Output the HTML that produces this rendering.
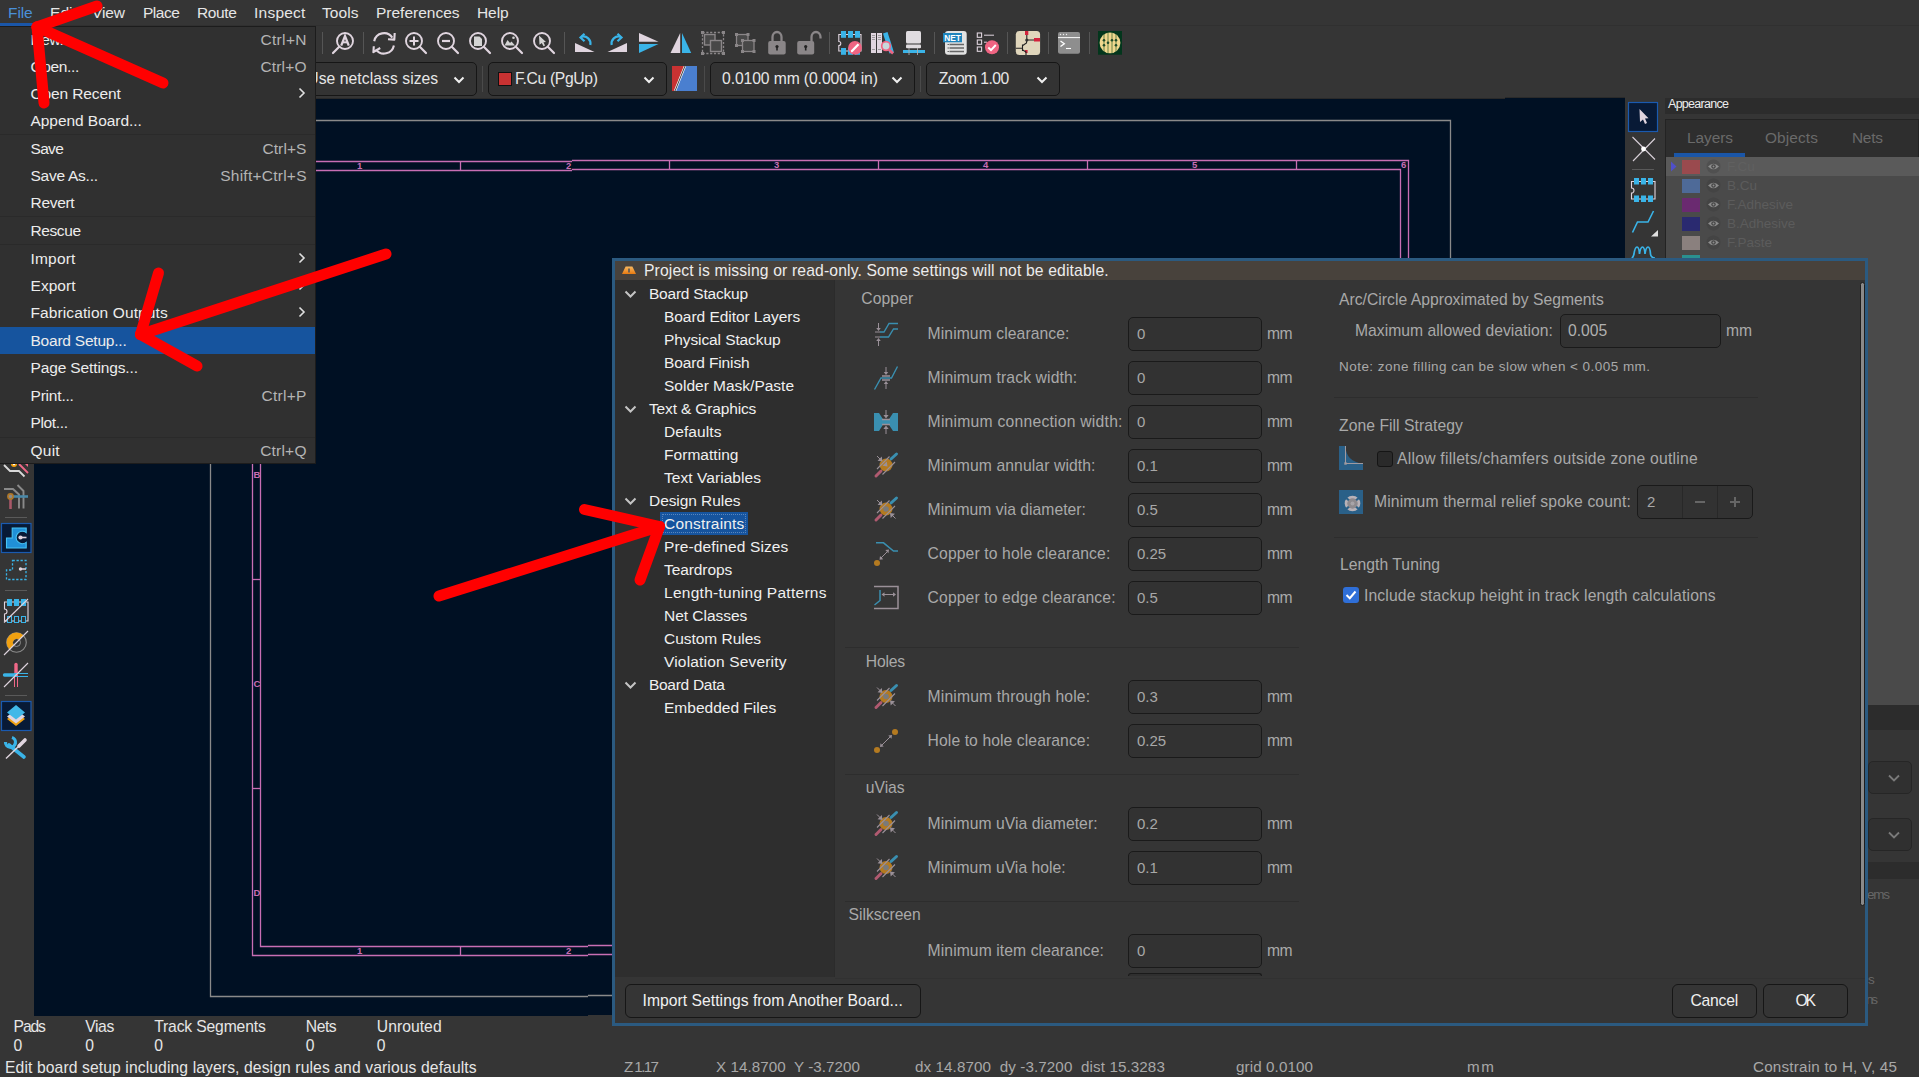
<!DOCTYPE html>
<html><head><meta charset="utf-8"><style>
html,body{margin:0;padding:0}
body{width:1919px;height:1077px;position:relative;overflow:hidden;background:#353535;font-family:"Liberation Sans",sans-serif}
.t{position:absolute;white-space:pre}
.r{position:absolute}
</style></head><body>
<div class="r" style="left:0px;top:25px;width:1919px;height:1px;background:#303030;"></div>
<div class="r" style="left:34px;top:99px;width:1591px;height:917px;background:#001023;"></div>
<div class="r" style="left:1505px;top:98px;width:120px;height:1px;background:#001023;"></div>
<div class="r" style="left:34px;top:98px;width:1471px;height:1px;background:#2a2a2a;"></div>
<div class="r" style="left:1505px;top:97px;width:120px;height:1px;background:#2a2a2a;"></div>
<div class="r" style="left:588px;top:1015px;width:24px;height:1px;background:#353535;"></div>
<svg class="r" style="left:0;top:0" width="34" height="770" viewBox="0 0 34 770"><path d="M4 465 L10 471 H19 L24.5 476.5" fill="none" stroke="#d8d8d8" stroke-width="1.8"/><circle cx="14" cy="464" r="3" fill="#f0a010"/><circle cx="14" cy="464" r="1.2" fill="#fff"/><path d="M19 464 L28 473" stroke="#f06888" stroke-width="1.8"/><path d="M25 464 H28 V467 Z" fill="#f06888"/><path d="M4 489 H13 L19 494.5 V508.5 M17.5 485 L23.5 491 V508.5" fill="none" stroke="#8a8a8a" stroke-width="1.9"/><path d="M10.5 499 V509" stroke="#a85868" stroke-width="2.6"/><path d="M13 496.5 H28" stroke="#4a88a8" stroke-width="2.6"/><circle cx="10.5" cy="496.5" r="2.6" fill="#8a8a8a" stroke="#b07828" stroke-width="1.6"/><path d="M5 517.5 H27" stroke="#5a5a5a" stroke-width="1"/><path d="M5 590.5 H27" stroke="#5a5a5a" stroke-width="1"/><path d="M5 695.5 H27" stroke="#5a5a5a" stroke-width="1"/><rect x="1.5" y="523.5" width="29.5" height="29" fill="#081a36" stroke="#1a5ab0" stroke-width="1.2"/><rect x="1.5" y="701.5" width="29.5" height="29" fill="#081a36" stroke="#1a5ab0" stroke-width="1.2"/><path d="M6.5 538 H12.2 V528 H26.2 V532.6 A 6.24 6.24 0 1 0 26.2 542.4 V548 H6.5 Z" fill="#2090d8" stroke="#48c4f4" stroke-width="1.1"/><circle cx="20.5" cy="537.5" r="2.1" fill="#e0d5df"/><path d="M20.5 537.5 H26.5" stroke="#e0d5df" stroke-width="1.6"/><path d="M12.5 560.5 H26 V579.5 H6.5 V570 H12.5 Z" fill="none" stroke="#3ab4e8" stroke-width="1.3" stroke-dasharray="2.3 1.7"/><circle cx="20.5" cy="569" r="1.7" fill="#e0d5df"/><path d="M20.5 569 H26" stroke="#e0d5df" stroke-width="1.5"/><path d="M4.5 602 H28 V621 H4.5 V614 A 2.5 2.5 0 0 0 4.5 609 Z" fill="none" stroke="#e0d5df" stroke-width="1.1"/><rect x="7" y="599" width="5" height="7" fill="#3ab4e8"/><rect x="7.5" y="616.5" width="4" height="6" fill="#333" stroke="#3ab4e8" stroke-width="1"/><rect x="14" y="599" width="5" height="7" fill="#3ab4e8"/><rect x="14.5" y="616.5" width="4" height="6" fill="#333" stroke="#3ab4e8" stroke-width="1"/><rect x="21" y="599" width="5" height="7" fill="#3ab4e8"/><rect x="21.5" y="616.5" width="4" height="6" fill="#333" stroke="#3ab4e8" stroke-width="1"/><path d="M4 622.5 L28 599" stroke="#e0d5df" stroke-width="1.1"/><circle cx="16.5" cy="642.5" r="9.8" fill="none" stroke="#8a8a8a" stroke-width="1.1"/><circle cx="16.5" cy="642.5" r="4" fill="none" stroke="#8a8a8a" stroke-width="1"/><path d="M9.5 649.5 A 9.8 9.8 0 0 1 23.5 635.5 L19.3 639.7 A 4 4 0 0 0 13.7 645.3 Z" fill="#f0a010"/><path d="M4 655 L28 631" stroke="#e0d5df" stroke-width="1.1"/><path d="M16 664.5 V675" stroke="#f06888" stroke-width="3.4" stroke-linecap="round"/><path d="M14.5 675 V687 M17.5 675 V687" stroke="#f06888" stroke-width="1"/><path d="M4.5 675 H14" stroke="#3ab4e8" stroke-width="3.4" stroke-linecap="round"/><path d="M14 673.5 H28 M14 676.5 H28" stroke="#3ab4e8" stroke-width="1"/><path d="M4 687 L28 663" stroke="#e0d5df" stroke-width="1.1"/><path d="M16 712 L25 719 L16 726 L7 719 Z" fill="#f0a010"/><path d="M16 709.5 L25 716.5 L16 723.5 L7 716.5 Z" fill="#e0d5df"/><path d="M16 705 L25 712.5 L16 719.5 L7 712.5 Z" fill="#40b8e8"/><path d="M9 745 L24 757" stroke="#3ab4e8" stroke-width="3.6" stroke-linecap="round"/><path d="M5.5 742 A 5 5 0 1 0 12 737.5" fill="none" stroke="#3ab4e8" stroke-width="3.2"/><path d="M6 758.5 L19 746" stroke="#e0d5df" stroke-width="1.4"/><path d="M19 746 L25 740" stroke="#e0d5df" stroke-width="3.6" stroke-linecap="round"/></svg>
<svg class="r" style="left:1625px;top:98px" width="40" height="162" viewBox="1625 98 40 162"><rect x="1628.5" y="102.5" width="29" height="29" fill="#081a36" stroke="#1a5ab0" stroke-width="1.2"/><path d="M1639.5 109 L1648.5 118.2 L1645 118.5 L1647 123 L1645 124 L1643 119.5 L1640 122 Z" fill="#e0d5df"/><path d="M1632.5 137 L1655 159.5 M1655 138.5 L1633 161" stroke="#d8d0d8" stroke-width="1.1"/><circle cx="1643.5" cy="149" r="2.4" fill="#fff"/><path d="M1632 169.5 H1654" stroke="#5a5a5a" stroke-width="1"/><path d="M1631.5 181.5 H1655 V199 H1631.5 V193 A 2.2 2.2 0 0 0 1631.5 188 Z" fill="none" stroke="#e0d5df" stroke-width="1.1"/><rect x="1634" y="178" width="5" height="6.5" fill="#3ab4e8"/><rect x="1634" y="195.5" width="5" height="6.5" fill="#3ab4e8"/><rect x="1641" y="178" width="5" height="6.5" fill="#3ab4e8"/><rect x="1641" y="195.5" width="5" height="6.5" fill="#3ab4e8"/><rect x="1648" y="178" width="5" height="6.5" fill="#3ab4e8"/><rect x="1648" y="195.5" width="5" height="6.5" fill="#3ab4e8"/><path d="M1632.5 232.5 L1637.5 222 H1648 L1653.5 211" fill="none" stroke="#3ab4e8" stroke-width="1.6"/><path d="M1651 236.5 L1658 230 V236.5 Z" fill="#e0e0e0"/><path d="M1631.5 258 Q1633 258 1634 254 Q1635 247 1637 247 Q1639 247 1639.5 254 Q1640.5 247 1642.5 247 Q1644.5 247 1645 254 Q1646 247 1648 247 Q1650 247 1650.5 254 Q1651 258 1655 258" fill="none" stroke="#3ab4e8" stroke-width="1.7"/></svg>
<svg class="r" style="left:0;top:0" width="1919" height="1077" viewBox="0 0 1919 1077">
<path d="M210.5 120.5 H1450.5 V995.5 H588 M588 996.5 H210.5 V120.5" fill="none" stroke="#8a8a8a" stroke-width="1.3"/>
<path d="M572 161.5 H252.5 V955.5 H588 M572 160.5 H1408.5 V954.5 H588" fill="none" stroke="#c86eb4" stroke-width="1.3"/>
<path d="M572 170.5 H260.5 V946.5 H588 M572 169.5 H1400.5 V945.5 H588" fill="none" stroke="#c86eb4" stroke-width="1.3"/>
<line x1="460.5" y1="161.5" x2="460.5" y2="170.5" stroke="#c86eb4" stroke-width="1.3"/>
<line x1="460.5" y1="946.5" x2="460.5" y2="955.5" stroke="#c86eb4" stroke-width="1.3"/>
<line x1="669.5" y1="160.5" x2="669.5" y2="169.5" stroke="#c86eb4" stroke-width="1.3"/>
<line x1="669.5" y1="945.5" x2="669.5" y2="954.5" stroke="#c86eb4" stroke-width="1.3"/>
<line x1="878.5" y1="160.5" x2="878.5" y2="169.5" stroke="#c86eb4" stroke-width="1.3"/>
<line x1="878.5" y1="945.5" x2="878.5" y2="954.5" stroke="#c86eb4" stroke-width="1.3"/>
<line x1="1087.5" y1="160.5" x2="1087.5" y2="169.5" stroke="#c86eb4" stroke-width="1.3"/>
<line x1="1087.5" y1="945.5" x2="1087.5" y2="954.5" stroke="#c86eb4" stroke-width="1.3"/>
<line x1="1296.5" y1="160.5" x2="1296.5" y2="169.5" stroke="#c86eb4" stroke-width="1.3"/>
<line x1="1296.5" y1="945.5" x2="1296.5" y2="954.5" stroke="#c86eb4" stroke-width="1.3"/>
<line x1="252.5" y1="370.5" x2="260.5" y2="370.5" stroke="#c86eb4" stroke-width="1.3"/>
<line x1="1400.5" y1="370.5" x2="1408.5" y2="370.5" stroke="#c86eb4" stroke-width="1.3"/>
<line x1="252.5" y1="579.5" x2="260.5" y2="579.5" stroke="#c86eb4" stroke-width="1.3"/>
<line x1="1400.5" y1="579.5" x2="1408.5" y2="579.5" stroke="#c86eb4" stroke-width="1.3"/>
<line x1="252.5" y1="788.5" x2="260.5" y2="788.5" stroke="#c86eb4" stroke-width="1.3"/>
<line x1="1400.5" y1="788.5" x2="1408.5" y2="788.5" stroke="#c86eb4" stroke-width="1.3"/>
</svg>
<div class="t" style="left:357.00px;top:161.46px;font-size:9.5px;line-height:9.5px;color:#c86eb4;font-weight:bold">1</div>
<div class="t" style="left:357.00px;top:946.46px;font-size:9.5px;line-height:9.5px;color:#c86eb4;font-weight:bold">1</div>
<div class="t" style="left:566.00px;top:161.46px;font-size:9.5px;line-height:9.5px;color:#c86eb4;font-weight:bold">2</div>
<div class="t" style="left:566.00px;top:946.46px;font-size:9.5px;line-height:9.5px;color:#c86eb4;font-weight:bold">2</div>
<div class="t" style="left:774.00px;top:160.46px;font-size:9.5px;line-height:9.5px;color:#c86eb4;font-weight:bold">3</div>
<div class="t" style="left:774.00px;top:946.46px;font-size:9.5px;line-height:9.5px;color:#c86eb4;font-weight:bold">3</div>
<div class="t" style="left:983.00px;top:160.46px;font-size:9.5px;line-height:9.5px;color:#c86eb4;font-weight:bold">4</div>
<div class="t" style="left:983.00px;top:946.46px;font-size:9.5px;line-height:9.5px;color:#c86eb4;font-weight:bold">4</div>
<div class="t" style="left:1192.00px;top:160.46px;font-size:9.5px;line-height:9.5px;color:#c86eb4;font-weight:bold">5</div>
<div class="t" style="left:1192.00px;top:946.46px;font-size:9.5px;line-height:9.5px;color:#c86eb4;font-weight:bold">5</div>
<div class="t" style="left:1401.00px;top:160.46px;font-size:9.5px;line-height:9.5px;color:#c86eb4;font-weight:bold">6</div>
<div class="t" style="left:1401.00px;top:946.46px;font-size:9.5px;line-height:9.5px;color:#c86eb4;font-weight:bold">6</div>
<div class="t" style="left:253.50px;top:261.46px;font-size:9.5px;line-height:9.5px;color:#c86eb4;font-weight:bold">A</div>
<div class="t" style="left:1401.50px;top:261.46px;font-size:9.5px;line-height:9.5px;color:#c86eb4;font-weight:bold">A</div>
<div class="t" style="left:253.50px;top:470.46px;font-size:9.5px;line-height:9.5px;color:#c86eb4;font-weight:bold">B</div>
<div class="t" style="left:1401.50px;top:470.46px;font-size:9.5px;line-height:9.5px;color:#c86eb4;font-weight:bold">B</div>
<div class="t" style="left:253.50px;top:679.46px;font-size:9.5px;line-height:9.5px;color:#c86eb4;font-weight:bold">C</div>
<div class="t" style="left:1401.50px;top:679.46px;font-size:9.5px;line-height:9.5px;color:#c86eb4;font-weight:bold">C</div>
<div class="t" style="left:253.50px;top:888.46px;font-size:9.5px;line-height:9.5px;color:#c86eb4;font-weight:bold">D</div>
<div class="t" style="left:1401.50px;top:888.46px;font-size:9.5px;line-height:9.5px;color:#c86eb4;font-weight:bold">D</div>
<div class="t" style="left:8.00px;top:5.28px;font-size:15.5px;line-height:15.5px;color:#4a90d9;letter-spacing:-0.085px;">File</div>
<div class="r" style="left:0px;top:23px;width:37px;height:3px;background:#1a56a8;"></div>
<div class="t" style="left:50.00px;top:5.28px;font-size:15.5px;line-height:15.5px;color:#e6e6e6;letter-spacing:0.062px;">Edit</div>
<div class="t" style="left:92.00px;top:5.28px;font-size:15.5px;line-height:15.5px;color:#e6e6e6;letter-spacing:-0.160px;">View</div>
<div class="t" style="left:143.00px;top:5.28px;font-size:15.5px;line-height:15.5px;color:#e6e6e6;letter-spacing:-0.488px;">Place</div>
<div class="t" style="left:197.00px;top:5.28px;font-size:15.5px;line-height:15.5px;color:#e6e6e6;letter-spacing:-0.396px;">Route</div>
<div class="t" style="left:254.00px;top:5.28px;font-size:15.5px;line-height:15.5px;color:#e6e6e6;letter-spacing:0.239px;">Inspect</div>
<div class="t" style="left:322.00px;top:5.28px;font-size:15.5px;line-height:15.5px;color:#e6e6e6;letter-spacing:0.096px;">Tools</div>
<div class="t" style="left:376.00px;top:5.28px;font-size:15.5px;line-height:15.5px;color:#e6e6e6;letter-spacing:-0.005px;">Preferences</div>
<div class="t" style="left:477.00px;top:5.28px;font-size:15.5px;line-height:15.5px;color:#e6e6e6;letter-spacing:-0.077px;">Help</div>
<svg class="r" style="left:0;top:0" width="1200" height="60" viewBox="0 0 1200 60"><line x1="322.5" y1="32" x2="322.5" y2="54" stroke="#555" stroke-width="1"/><line x1="363.5" y1="32" x2="363.5" y2="54" stroke="#555" stroke-width="1"/><line x1="564.5" y1="32" x2="564.5" y2="54" stroke="#555" stroke-width="1"/><line x1="829.5" y1="32" x2="829.5" y2="54" stroke="#555" stroke-width="1"/><line x1="934.5" y1="32" x2="934.5" y2="54" stroke="#555" stroke-width="1"/><line x1="1007.5" y1="32" x2="1007.5" y2="54" stroke="#555" stroke-width="1"/><line x1="1048.5" y1="32" x2="1048.5" y2="54" stroke="#555" stroke-width="1"/><line x1="1089.5" y1="32" x2="1089.5" y2="54" stroke="#555" stroke-width="1"/><circle cx="345" cy="41" r="8" fill="none" stroke="#e0d5df" stroke-width="1.9"/><line x1="339.2" y1="46.8" x2="333" y2="53" stroke="#e0d5df" stroke-width="2.2" stroke-linecap="round"/><path d="M341.2 45.6 L345 36 L348.8 45.6" fill="none" stroke="#e0d5df" stroke-width="2.3" stroke-linejoin="miter"/><path d="M342.6 42.3 H347.4" stroke="#e0d5df" stroke-width="2"/><path d="M374.2 41.2 A10 10 0 0 1 392.3 37.6" fill="none" stroke="#e0d5df" stroke-width="2.1"/><path d="M388 39.2 L394.3 39.6 L394.7 33" fill="none" stroke="#e0d5df" stroke-width="2.1" stroke-linejoin="round"/><path d="M393.9 45.5 A10 10 0 0 1 375.9 49.3" fill="none" stroke="#e0d5df" stroke-width="2.1"/><path d="M373.8 46.3 L373.4 52.2 L380.2 48" fill="none" stroke="#e0d5df" stroke-width="2.1" stroke-linejoin="round"/><circle cx="414" cy="41" r="8" fill="none" stroke="#e0d5df" stroke-width="1.9"/><line x1="419.8" y1="46.8" x2="426" y2="53" stroke="#e0d5df" stroke-width="2.2" stroke-linecap="round"/><path d="M409.5 41 H418.5 M414 36.5 V45.5" stroke="#e0d5df" stroke-width="2"/><circle cx="446" cy="41" r="8" fill="none" stroke="#e0d5df" stroke-width="1.9"/><line x1="451.8" y1="46.8" x2="458" y2="53" stroke="#e0d5df" stroke-width="2.2" stroke-linecap="round"/><path d="M442 41 H450" stroke="#e0d5df" stroke-width="2.2"/><circle cx="478" cy="41" r="8" fill="none" stroke="#e0d5df" stroke-width="1.9"/><line x1="483.8" y1="46.8" x2="490" y2="53" stroke="#e0d5df" stroke-width="2.2" stroke-linecap="round"/><path d="M474 36.5 H479.5 L482 39 V46 H474 Z" fill="#d4d4d4"/><circle cx="510" cy="41" r="8" fill="none" stroke="#e0d5df" stroke-width="1.9"/><line x1="515.8" y1="46.8" x2="522" y2="53" stroke="#e0d5df" stroke-width="2.2" stroke-linecap="round"/><path d="M504.5 45.5 L507.5 40 L510 43 L511.5 41.5 L515 45.5 Z" fill="#d4d4d4"/><circle cx="513.5" cy="37.7" r="1.3" fill="#d4d4d4"/><circle cx="542" cy="41" r="8" fill="none" stroke="#e0d5df" stroke-width="1.9"/><line x1="547.8" y1="46.8" x2="554" y2="53" stroke="#e0d5df" stroke-width="2.2" stroke-linecap="round"/><path d="M539 35.5 L546 42 L543.5 42.3 L545 45.5 L543.5 46.2 L541.8 43 L539.5 44.8 Z" fill="#d4d4d4"/><path d="M575 43 L594.5 52 H575 Z" fill="#e0d5df"/><path d="M590.3 45 A 7 7 0 0 0 581.5 36.8" fill="none" stroke="#3ab4e8" stroke-width="2.2"/><path d="M584.5 33.8 L580.5 37.5 L584.5 41.3" fill="none" stroke="#3ab4e8" stroke-width="2.2"/><path d="M607.5 52 L627 43 V52 Z" fill="#e0d5df"/><path d="M611.7 45 A 7 7 0 0 1 620.5 36.8" fill="none" stroke="#3ab4e8" stroke-width="2.2"/><path d="M617.5 33.8 L621.5 37.5 L617.5 41.3" fill="none" stroke="#3ab4e8" stroke-width="2.2"/><path d="M639 33 L658.5 41.8 H639 Z" fill="#e0d5df"/><path d="M639 44 H658.5 L639 53 Z" fill="#3ab4e8"/><path d="M680.2 33 V53 H670.5 Z" fill="#e0d5df"/><path d="M682 33 L691.2 53 H682 Z" fill="#3ab4e8"/><rect x="702.5" y="32.5" width="21" height="21" fill="none" stroke="#8a8688" stroke-width="1.3" stroke-dasharray="2.2 1.6"/><rect x="704.5" y="34.5" width="10.5" height="10.5" fill="#484848" stroke="#8a8688" stroke-width="1.4"/><rect x="710.5" y="40.5" width="11" height="11" fill="#484848" stroke="#8a8688" stroke-width="1.4"/><rect x="701.0" y="31.0" width="3" height="3" fill="#8a8688"/><rect x="722.0" y="31.0" width="3" height="3" fill="#8a8688"/><rect x="701.0" y="52.0" width="3" height="3" fill="#8a8688"/><rect x="722.0" y="52.0" width="3" height="3" fill="#8a8688"/><rect x="736.5" y="34.5" width="11.5" height="11" fill="#484848" stroke="#8a8688" stroke-width="1.3"/><rect x="742.5" y="40.5" width="11.5" height="11" fill="#484848" stroke="#8a8688" stroke-width="1.3"/><rect x="735.0" y="33.0" width="3" height="3" fill="#8a8688"/><rect x="746.5" y="33.0" width="3" height="3" fill="#8a8688"/><rect x="735.0" y="44.0" width="3" height="3" fill="#8a8688"/><rect x="741.0" y="39.0" width="3" height="3" fill="#8a8688"/><rect x="752.5" y="39.0" width="3" height="3" fill="#8a8688"/><rect x="741.0" y="50.0" width="3" height="3" fill="#8a8688"/><rect x="752.5" y="50.0" width="3" height="3" fill="#8a8688"/><path d="M772.5 41.5 V37 A 4.5 5 0 0 1 781.5 37 V41.5" fill="none" stroke="#8a8688" stroke-width="2.3"/><rect x="768.2" y="41" width="17.5" height="13.5" rx="2" fill="#8a8688"/><circle cx="777" cy="46.5" r="1.6" fill="#222"/><rect x="776.2" y="46.5" width="1.6" height="4" fill="#222"/><path d="M811.5 41.5 V37 A 4.5 5 0 0 1 820.5 37 V38.5" fill="none" stroke="#8a8688" stroke-width="2.3"/><rect x="797.2" y="41" width="17" height="13.5" rx="2" fill="#8a8688"/><circle cx="805.7" cy="46.5" r="1.6" fill="#222"/><rect x="804.9" y="46.5" width="1.6" height="4" fill="#222"/><path d="M838.8 34.5 H861 V51 H838.8 V45.5 A 2 2 0 0 0 838.8 41.5 Z" fill="none" stroke="#e0d5df" stroke-width="1.1"/><rect x="841" y="31" width="5" height="6.8" fill="#3ab4e8"/><rect x="841" y="48" width="5" height="6.8" fill="#3ab4e8"/><rect x="848" y="31" width="5" height="6.8" fill="#3ab4e8"/><rect x="848" y="48" width="5" height="6.8" fill="#3ab4e8"/><rect x="855" y="31" width="5" height="6.8" fill="#3ab4e8"/><rect x="855" y="48" width="5" height="6.8" fill="#3ab4e8"/><circle cx="855" cy="47.8" r="6.9" fill="#f06482"/><path d="M851.5 51.5 L858.5 44.2" stroke="#fff" stroke-width="2.3"/><path d="M851 52.3 L851.2 50.5 L852.6 51.9 Z" fill="#fff"/><rect x="871" y="33" width="5" height="20" fill="#e0d5df"/><rect x="877" y="33" width="5" height="20" fill="#e0d5df"/><path d="M883 33.5 L887.5 32 L894 52.5 L889.5 53.5 Z" fill="#3ab4e8"/><circle cx="886" cy="46" r="4.3" fill="#c8d8dc" stroke="#f06482" stroke-width="1.7"/><path d="M889 49.5 L893 53.5" stroke="#f06482" stroke-width="2.5"/><path d="M872 35.5 H875 M872 37.5 H875 M872 39.5 H875 M878 35.5 H881 M878 37.5 H881 M878 39.5 H881 M872 49.5 H875 M878 49.5 H881" stroke="#8a8a8a" stroke-width="0.8"/><rect x="906" y="31" width="15" height="12.5" rx="1.5" fill="#e0dce0"/><rect x="906" y="44.5" width="15" height="3.8" rx="1" fill="#e0dce0"/><rect x="903" y="50" width="22" height="3" fill="#3ab4e8"/><path d="M909 48 V55 M917.5 48 V55" stroke="#aaa" stroke-width="0.9"/><rect x="945" y="31" width="21.7" height="23.8" rx="3" fill="#e2e2e2"/><rect x="943" y="33" width="19" height="9.3" fill="#1e84bc"/><text x="944.2" y="41.3" font-family="Liberation Sans" font-weight="bold" font-size="9.3" fill="#fff" textLength="16.8" lengthAdjust="spacingAndGlyphs">NET</text><path d="M949.5 44.5 H964 M949.5 48 H964 M949.5 51.5 H964" stroke="#666" stroke-width="1.6"/><path d="M947.5 44.5 H949 M947.5 48 H949 M947.5 51.5 H949" stroke="#666" stroke-width="1"/><g fill="none" stroke="#e0d5df" stroke-width="1.1"><rect x="977.3" y="33" width="4.3" height="4.3"/><rect x="977.3" y="40" width="4.3" height="4.3"/><rect x="977.3" y="47" width="4.3" height="4.3"/></g><path d="M984 35.2 H994 M984 42.2 H987" stroke="#e0d5df" stroke-width="1"/><circle cx="992" cy="47.3" r="7" fill="#f06482"/><path d="M988.3 47.5 L991 50.2 L995.8 45" fill="none" stroke="#fff" stroke-width="1.9"/><rect x="1015.8" y="31" width="24.3" height="24" rx="3.5" fill="#e0d6bc"/><rect x="1025" y="31" width="3.3" height="4" fill="#d2223c"/><rect x="1034" y="38" width="6" height="3.5" fill="#d2223c"/><rect x="1025" y="50" width="2.6" height="3" fill="#d2223c"/><path d="M1026.8 35 V39.5 M1026.8 40 H1034 M1026.8 40 L1026.5 43 L1022.8 45.5 M1022.5 44.5 V51 M1015.8 48.2 H1022.5 M1022.8 50 L1026 52 V55" fill="none" stroke="#222" stroke-width="1.1"/><circle cx="1026.8" cy="40" r="1.6" fill="#333"/><rect x="1058" y="32" width="22" height="21.8" rx="2" fill="#8e8e8e"/><rect x="1058" y="37" width="22" height="1.1" fill="#f0f0f0"/><circle cx="1060.5" cy="34.5" r=".7" fill="#eee"/><circle cx="1063.5" cy="34.5" r=".7" fill="#eee"/><circle cx="1066.5" cy="34.5" r=".7" fill="#eee"/><path d="M1060.5 41 L1064.3 43.8 L1060.5 46.5" fill="none" stroke="#fff" stroke-width="1.3"/><path d="M1066 48.5 H1071" stroke="#fff" stroke-width="1.1"/><rect x="1098" y="31" width="24" height="23.7" fill="#03361c"/><circle cx="1110" cy="42.8" r="10.4" fill="#f0d88e"/><path d="M1104 34 V51.5 M1108 32.5 V53 M1112 32.5 V53 M1116 34 V51.5" stroke="#5a7a40" stroke-width="0.9"/><g fill="#1e4a28"><circle cx="1104" cy="40.3" r="1.3"/><circle cx="1104" cy="45.3" r="1.3"/><circle cx="1108" cy="42.8" r="1.3"/><circle cx="1112" cy="40.3" r="1.3"/><circle cx="1116" cy="40.3" r="1.3"/><circle cx="1116" cy="45.3" r="1.3"/></g></svg>
<div class="r" style="left:200px;top:62px;width:277px;height:34px;background:#333333;border:1px solid #161616;border-radius:5px;box-sizing:border-box;"></div>
<div class="t" style="left:307.30px;top:70.91px;font-size:15.7px;line-height:15.7px;color:#e6e6e6;letter-spacing:0.059px;">Use netclass sizes</div>
<svg class="r" style="left:453px;top:74.5px;" width="12" height="10" viewBox="0 0 12 10"><path d="M1.5 2.5 L6 7 L10.5 2.5" fill="none" stroke="#f0f0f0" stroke-width="2"/></svg>
<div class="r" style="left:488px;top:62px;width:179px;height:34px;background:#333333;border:1px solid #161616;border-radius:5px;box-sizing:border-box;"></div>
<div class="t" style="left:515.00px;top:70.91px;font-size:15.7px;line-height:15.7px;color:#e6e6e6;letter-spacing:-0.335px;">F.Cu (PgUp)</div>
<svg class="r" style="left:643px;top:74.5px;" width="12" height="10" viewBox="0 0 12 10"><path d="M1.5 2.5 L6 7 L10.5 2.5" fill="none" stroke="#f0f0f0" stroke-width="2"/></svg>
<div class="r" style="left:498px;top:72px;width:14px;height:14px;background:#c83232;border:1px solid #111;box-sizing:border-box;"></div>
<div class="r" style="left:710px;top:62px;width:205px;height:34px;background:#333333;border:1px solid #161616;border-radius:5px;box-sizing:border-box;"></div>
<div class="t" style="left:722.00px;top:70.91px;font-size:15.7px;line-height:15.7px;color:#e6e6e6;letter-spacing:-0.097px;">0.0100 mm (0.0004 in)</div>
<svg class="r" style="left:891px;top:74.5px;" width="12" height="10" viewBox="0 0 12 10"><path d="M1.5 2.5 L6 7 L10.5 2.5" fill="none" stroke="#f0f0f0" stroke-width="2"/></svg>
<div class="r" style="left:926px;top:62px;width:134px;height:34px;background:#333333;border:1px solid #161616;border-radius:5px;box-sizing:border-box;"></div>
<div class="t" style="left:938.70px;top:70.91px;font-size:15.7px;line-height:15.7px;color:#e6e6e6;letter-spacing:-0.556px;">Zoom 1.00</div>
<svg class="r" style="left:1036px;top:74.5px;" width="12" height="10" viewBox="0 0 12 10"><path d="M1.5 2.5 L6 7 L10.5 2.5" fill="none" stroke="#f0f0f0" stroke-width="2"/></svg>
<div class="r" style="left:482px;top:66px;width:1px;height:26px;background:#4a4a4a;"></div>
<div class="r" style="left:704px;top:66px;width:1px;height:26px;background:#4a4a4a;"></div>
<div class="r" style="left:920px;top:66px;width:1px;height:26px;background:#4a4a4a;"></div>
<svg class="r" style="left:672px;top:66px;" width="25" height="25" viewBox="0 0 25 25"><rect width="25" height="25" fill="#4a7fd0"/><path d="M0 0 H13 L3 25 H0 Z" fill="#c83232"/><path d="M13 0 L3 25" stroke="#fff" stroke-width="2.2"/><path d="M13 0 L3 25" stroke="#111" stroke-width="0.8"/></svg>
<div class="t" style="left:13.60px;top:1018.51px;font-size:15.7px;line-height:15.7px;color:#e6e6e6;letter-spacing:-1.165px;">Pads</div>
<div class="t" style="left:13.60px;top:1038.21px;font-size:15.7px;line-height:15.7px;color:#e6e6e6;">0</div>
<div class="t" style="left:85.20px;top:1018.51px;font-size:15.7px;line-height:15.7px;color:#e6e6e6;letter-spacing:-0.367px;">Vias</div>
<div class="t" style="left:85.20px;top:1038.21px;font-size:15.7px;line-height:15.7px;color:#e6e6e6;">0</div>
<div class="t" style="left:154.20px;top:1018.51px;font-size:15.7px;line-height:15.7px;color:#e6e6e6;letter-spacing:-0.159px;">Track Segments</div>
<div class="t" style="left:154.20px;top:1038.21px;font-size:15.7px;line-height:15.7px;color:#e6e6e6;">0</div>
<div class="t" style="left:305.80px;top:1018.51px;font-size:15.7px;line-height:15.7px;color:#e6e6e6;letter-spacing:-0.447px;">Nets</div>
<div class="t" style="left:305.80px;top:1038.21px;font-size:15.7px;line-height:15.7px;color:#e6e6e6;">0</div>
<div class="t" style="left:376.80px;top:1018.51px;font-size:15.7px;line-height:15.7px;color:#e6e6e6;letter-spacing:0.039px;">Unrouted</div>
<div class="t" style="left:376.80px;top:1038.21px;font-size:15.7px;line-height:15.7px;color:#e6e6e6;">0</div>
<div class="t" style="left:5.00px;top:1059.91px;font-size:15.7px;line-height:15.7px;color:#e6e6e6;letter-spacing:0.102px;">Edit board setup including layers, design rules and various defaults</div>
<div class="t" style="left:624.00px;top:1059.13px;font-size:15.2px;line-height:15.2px;color:#a8a8a8;letter-spacing:-1.603px;">Z 1.17</div>
<div class="t" style="left:716.00px;top:1059.13px;font-size:15.2px;line-height:15.2px;color:#a8a8a8;letter-spacing:0.051px;">X 14.8700  Y -3.7200</div>
<div class="t" style="left:915.00px;top:1059.13px;font-size:15.2px;line-height:15.2px;color:#a8a8a8;letter-spacing:0.094px;">dx 14.8700  dy -3.7200  dist 15.3283</div>
<div class="t" style="left:1236.00px;top:1059.13px;font-size:15.2px;line-height:15.2px;color:#a8a8a8;letter-spacing:0.100px;">grid 0.0100</div>
<div class="t" style="left:1467.00px;top:1059.13px;font-size:15.2px;line-height:15.2px;color:#a8a8a8;letter-spacing:1.616px;">mm</div>
<div class="t" style="left:1753.00px;top:1059.13px;font-size:15.2px;line-height:15.2px;color:#a8a8a8;letter-spacing:0.216px;">Constrain to H, V, 45</div>
<div class="r" style="left:1665px;top:98px;width:254px;height:16px;background:#2c2c2c;"></div>
<div class="t" style="left:1668.00px;top:97.62px;font-size:12.5px;line-height:12.5px;color:#ececec;letter-spacing:-0.708px;">Appearance</div>
<div class="r" style="left:1665px;top:119px;width:254px;height:586px;background:#2e2e2e;border:1px solid #232323;box-sizing:border-box;"></div>
<div class="t" style="left:1687.00px;top:129.86px;font-size:15.4px;line-height:15.4px;color:#6a6a6a;letter-spacing:-0.040px;">Layers</div>
<div class="t" style="left:1765.00px;top:129.86px;font-size:15.4px;line-height:15.4px;color:#6a6a6a;letter-spacing:0.132px;">Objects</div>
<div class="t" style="left:1852.00px;top:129.86px;font-size:15.4px;line-height:15.4px;color:#6a6a6a;letter-spacing:-0.241px;">Nets</div>
<div class="r" style="left:1674px;top:153px;width:71px;height:4px;background:#1a56a8;"></div>
<div class="r" style="left:1666px;top:157px;width:253px;height:548px;background:#4a4a4a;"></div>
<div class="r" style="left:1666px;top:157px;width:253px;height:19px;background:#5a5a5a;"></div>
<svg class="r" style="left:1670px;top:161px;" width="8" height="11" viewBox="0 0 8 11"><path d="M1 0.5 L6.5 5.5 L1 10.5 Z" fill="#5050c8"/></svg>
<div class="r" style="left:1682px;top:160px;width:18px;height:14px;background:#9a4a4e;"></div>
<div class="t" style="left:1727.00px;top:160.07px;font-size:13.5px;line-height:13.5px;color:#606060;">F.Cu</div>
<svg class="r" style="left:1706px;top:159px;" width="15" height="15" viewBox="0 0 15 15"><circle cx="7.5" cy="7.5" r="7" fill="#505050"/><path d="M2 7.5 Q7.5 2 13 7.5 Q7.5 13 2 7.5 Z" fill="#8c8c8c"/><circle cx="7.5" cy="7.5" r="2.2" fill="#454545"/><circle cx="7.5" cy="7.5" r="1" fill="#8c8c8c"/></svg>
<div class="r" style="left:1682px;top:179px;width:18px;height:14px;background:#4e6a98;"></div>
<div class="t" style="left:1727.00px;top:179.07px;font-size:13.5px;line-height:13.5px;color:#5c5c5c;">B.Cu</div>
<svg class="r" style="left:1706px;top:178px;" width="15" height="15" viewBox="0 0 15 15"><circle cx="7.5" cy="7.5" r="7" fill="#444444"/><path d="M2 7.5 Q7.5 2 13 7.5 Q7.5 13 2 7.5 Z" fill="#8c8c8c"/><circle cx="7.5" cy="7.5" r="2.2" fill="#454545"/><circle cx="7.5" cy="7.5" r="1" fill="#8c8c8c"/></svg>
<div class="r" style="left:1682px;top:198px;width:18px;height:14px;background:#6a2a70;"></div>
<div class="t" style="left:1727.00px;top:198.07px;font-size:13.5px;line-height:13.5px;color:#5c5c5c;">F.Adhesive</div>
<svg class="r" style="left:1706px;top:197px;" width="15" height="15" viewBox="0 0 15 15"><circle cx="7.5" cy="7.5" r="7" fill="#444444"/><path d="M2 7.5 Q7.5 2 13 7.5 Q7.5 13 2 7.5 Z" fill="#8c8c8c"/><circle cx="7.5" cy="7.5" r="2.2" fill="#454545"/><circle cx="7.5" cy="7.5" r="1" fill="#8c8c8c"/></svg>
<div class="r" style="left:1682px;top:217px;width:18px;height:14px;background:#2a2a70;"></div>
<div class="t" style="left:1727.00px;top:217.07px;font-size:13.5px;line-height:13.5px;color:#5c5c5c;">B.Adhesive</div>
<svg class="r" style="left:1706px;top:216px;" width="15" height="15" viewBox="0 0 15 15"><circle cx="7.5" cy="7.5" r="7" fill="#444444"/><path d="M2 7.5 Q7.5 2 13 7.5 Q7.5 13 2 7.5 Z" fill="#8c8c8c"/><circle cx="7.5" cy="7.5" r="2.2" fill="#454545"/><circle cx="7.5" cy="7.5" r="1" fill="#8c8c8c"/></svg>
<div class="r" style="left:1682px;top:236px;width:18px;height:14px;background:#8a807e;"></div>
<div class="t" style="left:1727.00px;top:236.07px;font-size:13.5px;line-height:13.5px;color:#5c5c5c;">F.Paste</div>
<svg class="r" style="left:1706px;top:235px;" width="15" height="15" viewBox="0 0 15 15"><circle cx="7.5" cy="7.5" r="7" fill="#444444"/><path d="M2 7.5 Q7.5 2 13 7.5 Q7.5 13 2 7.5 Z" fill="#8c8c8c"/><circle cx="7.5" cy="7.5" r="2.2" fill="#454545"/><circle cx="7.5" cy="7.5" r="1" fill="#8c8c8c"/></svg>
<div class="r" style="left:1682px;top:255px;width:18px;height:14px;background:#2a9090;"></div>
<div class="r" style="left:1868px;top:705px;width:51px;height:25px;background:#2c2c2c;"></div>
<div class="r" style="left:1868px;top:761px;width:44px;height:33px;background:#303030;border:1px solid #262626;border-radius:5px;box-sizing:border-box;"></div>
<div class="r" style="left:1868px;top:818px;width:44px;height:33px;background:#303030;border:1px solid #262626;border-radius:5px;box-sizing:border-box;"></div>
<svg class="r" style="left:1887px;top:774px;" width="14" height="9" viewBox="0 0 14 9"><path d="M2 1.5 L7 6.5 L12 1.5" fill="none" stroke="#7a7a7a" stroke-width="1.8"/></svg>
<svg class="r" style="left:1887px;top:831px;" width="14" height="9" viewBox="0 0 14 9"><path d="M2 1.5 L7 6.5 L12 1.5" fill="none" stroke="#7a7a7a" stroke-width="1.8"/></svg>
<div class="r" style="left:1868px;top:862px;width:51px;height:17px;background:#2c2c2c;"></div>
<div class="t" style="left:1867.00px;top:888.07px;font-size:13.5px;line-height:13.5px;color:#676767;letter-spacing:-1.258px;">ems</div>
<div class="t" style="left:1868.00px;top:972.57px;font-size:13.5px;line-height:13.5px;color:#676767;">s</div>
<div class="t" style="left:1866.00px;top:992.57px;font-size:13.5px;line-height:13.5px;color:#676767;letter-spacing:-2.310px;">ns</div>
<div class="r" style="left:0px;top:26px;width:316px;height:438px;background:#303030;border:1px solid #1c1c1c;border-left:none;box-sizing:border-box;"></div>
<div class="r" style="left:0px;top:134px;width:315px;height:1px;background:#2a2a2a;"></div>
<div class="r" style="left:0px;top:216px;width:315px;height:1px;background:#2a2a2a;"></div>
<div class="r" style="left:0px;top:244px;width:315px;height:1px;background:#2a2a2a;"></div>
<div class="r" style="left:0px;top:437px;width:315px;height:1px;background:#2a2a2a;"></div>
<div class="r" style="left:0px;top:327px;width:315px;height:27px;background:#16549e;"></div>
<div class="t" style="left:30.50px;top:31.88px;font-size:15.5px;line-height:15.5px;color:#ececec;letter-spacing:-0.418px;">New...</div>
<div class="t" style="left:260.40px;top:31.88px;font-size:15.5px;line-height:15.5px;color:#b4b4b4;letter-spacing:0.354px;">Ctrl+N</div>
<div class="t" style="left:30.50px;top:58.88px;font-size:15.5px;line-height:15.5px;color:#ececec;letter-spacing:-0.357px;">Open...</div>
<div class="t" style="left:260.40px;top:58.88px;font-size:15.5px;line-height:15.5px;color:#b4b4b4;letter-spacing:0.168px;">Ctrl+O</div>
<div class="t" style="left:30.50px;top:85.88px;font-size:15.5px;line-height:15.5px;color:#ececec;letter-spacing:-0.100px;">Open Recent</div>
<svg class="r" style="left:297px;top:86.5px;" width="10" height="12" viewBox="0 0 10 12"><path d="M2.5 1.5 L7 6 L2.5 10.5" fill="none" stroke="#e0e0e0" stroke-width="1.6"/></svg>
<div class="t" style="left:30.50px;top:112.88px;font-size:15.5px;line-height:15.5px;color:#ececec;letter-spacing:-0.055px;">Append Board...</div>
<div class="t" style="left:30.50px;top:140.88px;font-size:15.5px;line-height:15.5px;color:#ececec;letter-spacing:-0.680px;">Save</div>
<div class="t" style="left:262.40px;top:140.88px;font-size:15.5px;line-height:15.5px;color:#b4b4b4;letter-spacing:0.109px;">Ctrl+S</div>
<div class="t" style="left:30.50px;top:167.88px;font-size:15.5px;line-height:15.5px;color:#ececec;letter-spacing:-0.250px;">Save As...</div>
<div class="t" style="left:220.20px;top:167.88px;font-size:15.5px;line-height:15.5px;color:#b4b4b4;letter-spacing:0.250px;">Shift+Ctrl+S</div>
<div class="t" style="left:30.50px;top:194.88px;font-size:15.5px;line-height:15.5px;color:#ececec;letter-spacing:-0.305px;">Revert</div>
<div class="t" style="left:30.50px;top:222.88px;font-size:15.5px;line-height:15.5px;color:#ececec;letter-spacing:-0.409px;">Rescue</div>
<div class="t" style="left:30.50px;top:250.88px;font-size:15.5px;line-height:15.5px;color:#ececec;letter-spacing:0.196px;">Import</div>
<svg class="r" style="left:297px;top:251.5px;" width="10" height="12" viewBox="0 0 10 12"><path d="M2.5 1.5 L7 6 L2.5 10.5" fill="none" stroke="#e0e0e0" stroke-width="1.6"/></svg>
<div class="t" style="left:30.50px;top:277.88px;font-size:15.5px;line-height:15.5px;color:#ececec;letter-spacing:0.041px;">Export</div>
<svg class="r" style="left:297px;top:278.5px;" width="10" height="12" viewBox="0 0 10 12"><path d="M2.5 1.5 L7 6 L2.5 10.5" fill="none" stroke="#e0e0e0" stroke-width="1.6"/></svg>
<div class="t" style="left:30.50px;top:304.88px;font-size:15.5px;line-height:15.5px;color:#ececec;letter-spacing:0.105px;">Fabrication Outputs</div>
<svg class="r" style="left:297px;top:305.5px;" width="10" height="12" viewBox="0 0 10 12"><path d="M2.5 1.5 L7 6 L2.5 10.5" fill="none" stroke="#e0e0e0" stroke-width="1.6"/></svg>
<div class="t" style="left:30.50px;top:332.88px;font-size:15.5px;line-height:15.5px;color:#ececec;letter-spacing:-0.219px;">Board Setup...</div>
<div class="t" style="left:30.50px;top:359.88px;font-size:15.5px;line-height:15.5px;color:#ececec;letter-spacing:-0.129px;">Page Settings...</div>
<div class="t" style="left:30.50px;top:387.88px;font-size:15.5px;line-height:15.5px;color:#ececec;letter-spacing:-0.199px;">Print...</div>
<div class="t" style="left:261.50px;top:387.88px;font-size:15.5px;line-height:15.5px;color:#b4b4b4;letter-spacing:0.289px;">Ctrl+P</div>
<div class="t" style="left:30.50px;top:414.88px;font-size:15.5px;line-height:15.5px;color:#ececec;letter-spacing:-0.363px;">Plot...</div>
<div class="t" style="left:30.50px;top:442.88px;font-size:15.5px;line-height:15.5px;color:#ececec;letter-spacing:0.227px;">Quit</div>
<div class="t" style="left:260.20px;top:442.88px;font-size:15.5px;line-height:15.5px;color:#b4b4b4;letter-spacing:0.208px;">Ctrl+Q</div>
<div class="r" style="left:612px;top:258px;width:1256px;height:768px;background:#2b5a80;"></div>
<div class="r" style="left:615px;top:261px;width:1250px;height:762px;background:#353535;"></div>
<div class="r" style="left:615px;top:261px;width:1250px;height:19px;background:#48423c;"></div>
<div class="t" style="left:644.00px;top:262.71px;font-size:15.7px;line-height:15.7px;color:#ececec;letter-spacing:0.147px;">Project is missing or read-only. Some settings will not be editable.</div>
<svg class="r" style="left:621px;top:265px;" width="16" height="11" viewBox="0 0 16 11"><defs><linearGradient id="wg" x1="0" y1="0" x2="0" y2="1"><stop offset="0" stop-color="#f8b860"/><stop offset="1" stop-color="#e87a10"/></linearGradient></defs><path d="M4.6 1.6 H11.4 L15 9 H1 Z" fill="url(#wg)"/><rect x="7.2" y="3.5" width="1.6" height="4" fill="#555"/></svg>
<div class="r" style="left:615px;top:280px;width:219px;height:697px;background:#2e2e2e;"></div>
<div class="r" style="left:834px;top:280px;width:1px;height:697px;background:#2b2b2b;"></div>
<svg class="r" style="left:624px;top:290px;" width="13" height="9" viewBox="0 0 13 9"><path d="M1.5 1.5 L6.5 6.5 L11.5 1.5" fill="none" stroke="#c4c4c4" stroke-width="2"/></svg>
<div class="t" style="left:649.00px;top:285.88px;font-size:15.5px;line-height:15.5px;color:#f0f0f0;letter-spacing:-0.223px;">Board Stackup</div>
<div class="t" style="left:664.00px;top:308.88px;font-size:15.5px;line-height:15.5px;color:#f0f0f0;letter-spacing:-0.046px;">Board Editor Layers</div>
<div class="t" style="left:664.00px;top:331.88px;font-size:15.5px;line-height:15.5px;color:#f0f0f0;letter-spacing:-0.097px;">Physical Stackup</div>
<div class="t" style="left:664.00px;top:354.88px;font-size:15.5px;line-height:15.5px;color:#f0f0f0;letter-spacing:-0.123px;">Board Finish</div>
<div class="t" style="left:664.00px;top:377.88px;font-size:15.5px;line-height:15.5px;color:#f0f0f0;letter-spacing:-0.003px;">Solder Mask/Paste</div>
<svg class="r" style="left:624px;top:405px;" width="13" height="9" viewBox="0 0 13 9"><path d="M1.5 1.5 L6.5 6.5 L11.5 1.5" fill="none" stroke="#c4c4c4" stroke-width="2"/></svg>
<div class="t" style="left:649.00px;top:400.88px;font-size:15.5px;line-height:15.5px;color:#f0f0f0;letter-spacing:-0.145px;">Text &amp; Graphics</div>
<div class="t" style="left:664.00px;top:423.88px;font-size:15.5px;line-height:15.5px;color:#f0f0f0;letter-spacing:0.074px;">Defaults</div>
<div class="t" style="left:664.00px;top:446.88px;font-size:15.5px;line-height:15.5px;color:#f0f0f0;letter-spacing:0.046px;">Formatting</div>
<div class="t" style="left:664.00px;top:469.88px;font-size:15.5px;line-height:15.5px;color:#f0f0f0;letter-spacing:0.057px;">Text Variables</div>
<svg class="r" style="left:624px;top:497px;" width="13" height="9" viewBox="0 0 13 9"><path d="M1.5 1.5 L6.5 6.5 L11.5 1.5" fill="none" stroke="#c4c4c4" stroke-width="2"/></svg>
<div class="t" style="left:649.00px;top:492.88px;font-size:15.5px;line-height:15.5px;color:#f0f0f0;letter-spacing:-0.066px;">Design Rules</div>
<div class="r" style="left:660px;top:512px;width:88px;height:23px;background:#16549e;"></div>
<div class="r" style="left:662px;top:514px;width:84px;height:19px;border:1px dotted #8aa8d0;box-sizing:border-box;opacity:.6"></div>
<div class="t" style="left:664.00px;top:515.88px;font-size:15.5px;line-height:15.5px;color:#f0f0f0;letter-spacing:0.197px;">Constraints</div>
<div class="t" style="left:664.00px;top:538.88px;font-size:15.5px;line-height:15.5px;color:#f0f0f0;letter-spacing:0.125px;">Pre-defined Sizes</div>
<div class="t" style="left:664.00px;top:561.88px;font-size:15.5px;line-height:15.5px;color:#f0f0f0;letter-spacing:-0.084px;">Teardrops</div>
<div class="t" style="left:664.00px;top:584.88px;font-size:15.5px;line-height:15.5px;color:#f0f0f0;letter-spacing:0.269px;">Length-tuning Patterns</div>
<div class="t" style="left:664.00px;top:607.88px;font-size:15.5px;line-height:15.5px;color:#f0f0f0;letter-spacing:-0.025px;">Net Classes</div>
<div class="t" style="left:664.00px;top:630.88px;font-size:15.5px;line-height:15.5px;color:#f0f0f0;letter-spacing:-0.031px;">Custom Rules</div>
<div class="t" style="left:664.00px;top:653.88px;font-size:15.5px;line-height:15.5px;color:#f0f0f0;letter-spacing:0.176px;">Violation Severity</div>
<svg class="r" style="left:624px;top:681px;" width="13" height="9" viewBox="0 0 13 9"><path d="M1.5 1.5 L6.5 6.5 L11.5 1.5" fill="none" stroke="#c4c4c4" stroke-width="2"/></svg>
<div class="t" style="left:649.00px;top:676.88px;font-size:15.5px;line-height:15.5px;color:#f0f0f0;letter-spacing:-0.292px;">Board Data</div>
<div class="t" style="left:664.00px;top:699.88px;font-size:15.5px;line-height:15.5px;color:#f0f0f0;letter-spacing:0.010px;">Embedded Files</div>
<svg class="r" style="left:0;top:0" width="1919" height="1077"><path d="M880 332 H884 L889 323.5 H898 M880 337 H888.5 L893.5 329 H898" fill="none" stroke="#3a8fb0" stroke-width="1.4"/><path d="M875 332 H880 M875 337 H880 M878.5 323 V328 M878.5 341 V346" stroke="#9a9098" stroke-width="1"/><path d="M878.5 331 L876.25 328.00 L880.75 328.00 Z" fill="#9a9098"/><path d="M878.5 338 L880.75 341.00 L876.25 341.00 Z" fill="#9a9098"/><path d="M874.5 389.5 L881 378 H891.5 L897.5 366.5" fill="none" stroke="#3a8fb0" stroke-width="1.4"/><path d="M882 376 H890 M882 380 H890" stroke="#9a9098" stroke-width="1.4"/><path d="M886 367 V372 M886 384 V389" stroke="#9a9098" stroke-width="1"/><path d="M886 375 L883.75 372.00 L888.25 372.00 Z" fill="#9a9098"/><path d="M886 381 L888.25 384.00 L883.75 384.00 Z" fill="#9a9098"/><path d="M874 413 H879 L883.5 420 H888.5 L893 413 H898 V431 H893 L888.5 424 H883.5 L879 431 H874 Z" fill="#3a8fb0"/><path d="M882 419.5 H890 M882 424.5 H890" stroke="#9a9098" stroke-width="1.3"/><path d="M886 410 V415 M886 429 V434" stroke="#9a9098" stroke-width="1"/><path d="M886 418.5 L883.38 415.00 L888.62 415.00 Z" fill="#9a9098"/><path d="M886 425.5 L888.62 429.00 L883.38 429.00 Z" fill="#9a9098"/><path d="M876 476 L881 471" stroke="#b05a70" stroke-width="3" stroke-linecap="round"/><path d="M891 459 L896.5 454" stroke="#3a8fb0" stroke-width="3" stroke-linecap="round"/><circle cx="886" cy="465" r="6.5" fill="#b47a20"/><path d="M877 469 L889.5 456.5 M882.5 474.5 L895 462" stroke="#9a9098" stroke-width="1.1"/><path d="M877 456 L881 460" stroke="#9a9098" stroke-width="1"/><path d="M882.5 461.5 L877.55 460.79 L881.79 456.55 Z" fill="#9a9098"/><path d="M887.5 466.5 L882.55 465.79 L886.79 461.55 Z" fill="#9a9098"/><path d="M876 520 L881 515" stroke="#b05a70" stroke-width="3" stroke-linecap="round"/><path d="M891 503 L896.5 498" stroke="#3a8fb0" stroke-width="3" stroke-linecap="round"/><circle cx="886" cy="509" r="6.5" fill="#b47a20"/><circle cx="886" cy="509" r="2.8" fill="#7a7a7a"/><path d="M877 513 L889.5 500.5 M882.5 518.5 L895 506" stroke="#9a9098" stroke-width="1.1"/><path d="M877 500 L881 504" stroke="#9a9098" stroke-width="1"/><path d="M882.5 505.5 L877.55 504.79 L881.79 500.55 Z" fill="#9a9098"/><path d="M895.5 518.5 L891.5 514.5" stroke="#9a9098" stroke-width="1"/><path d="M890 513 L894.95 513.71 L890.71 517.95 Z" fill="#9a9098"/><path d="M876 542.8 H883.5 L893.5 551 H898" fill="none" stroke="#3a8fb0" stroke-width="1.5"/><circle cx="877" cy="563" r="3" fill="#b47a20"/><path d="M881 558 L887 552" stroke="#9a9098" stroke-width="1"/><path d="M889 549.5 L888.47 553.21 L885.29 550.03 Z" fill="#9a9098"/><path d="M879.5 559.8 L880.03 556.09 L883.21 559.27 Z" fill="#9a9098"/><path d="M874 586.5 H898 V608.5 H874" fill="none" stroke="#9a9098" stroke-width="1.5"/><path d="M874.5 605 L880 600.5 V590" fill="none" stroke="#3a8fb0" stroke-width="1.5"/><path d="M884 594.5 H893" stroke="#9a9098" stroke-width="1"/><path d="M881.5 594.5 L884.50 592.25 L884.50 596.75 Z" fill="#9a9098"/><path d="M896 594.5 L893.00 596.75 L893.00 592.25 Z" fill="#9a9098"/><path d="M876 707.5 L881 702.5" stroke="#b05a70" stroke-width="3" stroke-linecap="round"/><path d="M891 690.5 L896.5 685.5" stroke="#3a8fb0" stroke-width="3" stroke-linecap="round"/><circle cx="886" cy="696.5" r="6.5" fill="#b47a20"/><circle cx="886" cy="696.5" r="2.8" fill="#7a7a7a"/><path d="M877 700.5 L889.5 688.0 M882.5 706.0 L895 693.5" stroke="#9a9098" stroke-width="1.1"/><path d="M877 687.5 L881 691.5" stroke="#9a9098" stroke-width="1"/><path d="M882.5 693.0 L877.55 692.29 L881.79 688.05 Z" fill="#9a9098"/><path d="M895.5 706.0 L891.5 702.0" stroke="#9a9098" stroke-width="1"/><path d="M890 700.5 L894.95 701.21 L890.71 705.45 Z" fill="#9a9098"/><circle cx="877" cy="750" r="3" fill="#b47a20"/><circle cx="895" cy="732" r="3" fill="#b47a20"/><path d="M882 745 L890 737" stroke="#9a9098" stroke-width="1"/><path d="M892 735 L891.47 738.71 L888.29 735.53 Z" fill="#9a9098"/><path d="M880 747 L880.53 743.29 L883.71 746.47 Z" fill="#9a9098"/><path d="M876 834.5 L881 829.5" stroke="#b05a70" stroke-width="3" stroke-linecap="round"/><path d="M891 817.5 L896.5 812.5" stroke="#3a8fb0" stroke-width="3" stroke-linecap="round"/><circle cx="886" cy="823.5" r="6.5" fill="#b47a20"/><circle cx="886" cy="823.5" r="2.8" fill="#7a7a7a"/><path d="M877 827.5 L889.5 815.0 M882.5 833.0 L895 820.5" stroke="#9a9098" stroke-width="1.1"/><path d="M877 814.5 L881 818.5" stroke="#9a9098" stroke-width="1"/><path d="M882.5 820.0 L877.55 819.29 L881.79 815.05 Z" fill="#9a9098"/><path d="M895.5 833.0 L891.5 829.0" stroke="#9a9098" stroke-width="1"/><path d="M890 827.5 L894.95 828.21 L890.71 832.45 Z" fill="#9a9098"/><path d="M876 878.5 L881 873.5" stroke="#b05a70" stroke-width="3" stroke-linecap="round"/><path d="M891 861.5 L896.5 856.5" stroke="#3a8fb0" stroke-width="3" stroke-linecap="round"/><circle cx="886" cy="867.5" r="6.5" fill="#b47a20"/><circle cx="886" cy="867.5" r="2.8" fill="#7a7a7a"/><path d="M877 871.5 L889.5 859.0 M882.5 877.0 L895 864.5" stroke="#9a9098" stroke-width="1.1"/><path d="M877 858.5 L881 862.5" stroke="#9a9098" stroke-width="1"/><path d="M882.5 864.0 L877.55 863.29 L881.79 859.05 Z" fill="#9a9098"/><path d="M895.5 877.0 L891.5 873.0" stroke="#9a9098" stroke-width="1"/><path d="M890 871.5 L894.95 872.21 L890.71 876.45 Z" fill="#9a9098"/><path d="M1339 446 H1345.5 V463.5 H1363 V470 H1339 Z" fill="#2a6088"/><path d="M1345.5 446 Q1346 462 1363 463.5 H1345.5 Z" fill="#2a6088"/><path d="M1345.5 446 V463.5 H1363" fill="none" stroke="#a09aa0" stroke-width="1"/><rect x="1344.3" y="462.3" width="2.4" height="2.4" fill="#a09aa0"/><rect x="1339" y="490" width="24" height="24" fill="#2a6088"/><circle cx="1352.5" cy="503.5" r="7.8" fill="#b8b2b8"/><circle cx="1352.5" cy="503.5" r="5" fill="#8e8a8e"/><circle cx="1352.5" cy="503.5" r="2" fill="#a8a4a8"/><path d="M1344 496 L1361 511 M1361 496 L1344 511" stroke="#2a6088" stroke-width="2.2"/><circle cx="1352.5" cy="503.5" r="5" fill="#8e8a8e"/><circle cx="1352.5" cy="503.5" r="2" fill="#a8a4a8"/></svg>
<div class="t" style="left:861.20px;top:290.51px;font-size:15.7px;line-height:15.7px;color:#a9a9a9;letter-spacing:0.121px;">Copper</div>
<div class="t" style="left:927.60px;top:325.71px;font-size:15.7px;line-height:15.7px;color:#a9a9a9;letter-spacing:0.087px;">Minimum clearance:</div>
<div class="r" style="left:1128px;top:317px;width:134px;height:34px;background:#323232;border:1px solid #1a1a1a;border-radius:5px;box-sizing:border-box;"></div>
<div class="t" style="left:1137.00px;top:326.30px;font-size:15px;line-height:15px;color:#a8a8a8;">0</div>
<div class="t" style="left:1267.00px;top:325.71px;font-size:15.7px;line-height:15.7px;color:#a9a9a9;letter-spacing:-0.619px;">mm</div>
<div class="t" style="left:927.60px;top:369.71px;font-size:15.7px;line-height:15.7px;color:#a9a9a9;letter-spacing:0.120px;">Minimum track width:</div>
<div class="r" style="left:1128px;top:361px;width:134px;height:34px;background:#323232;border:1px solid #1a1a1a;border-radius:5px;box-sizing:border-box;"></div>
<div class="t" style="left:1137.00px;top:370.30px;font-size:15px;line-height:15px;color:#a8a8a8;">0</div>
<div class="t" style="left:1267.00px;top:369.71px;font-size:15.7px;line-height:15.7px;color:#a9a9a9;letter-spacing:-0.619px;">mm</div>
<div class="t" style="left:927.60px;top:413.71px;font-size:15.7px;line-height:15.7px;color:#a9a9a9;letter-spacing:0.236px;">Minimum connection width:</div>
<div class="r" style="left:1128px;top:405px;width:134px;height:34px;background:#323232;border:1px solid #1a1a1a;border-radius:5px;box-sizing:border-box;"></div>
<div class="t" style="left:1137.00px;top:414.30px;font-size:15px;line-height:15px;color:#a8a8a8;">0</div>
<div class="t" style="left:1267.00px;top:413.71px;font-size:15.7px;line-height:15.7px;color:#a9a9a9;letter-spacing:-0.619px;">mm</div>
<div class="t" style="left:927.60px;top:457.71px;font-size:15.7px;line-height:15.7px;color:#a9a9a9;letter-spacing:0.105px;">Minimum annular width:</div>
<div class="r" style="left:1128px;top:449px;width:134px;height:34px;background:#323232;border:1px solid #1a1a1a;border-radius:5px;box-sizing:border-box;"></div>
<div class="t" style="left:1137.00px;top:458.30px;font-size:15px;line-height:15px;color:#a8a8a8;">0.1</div>
<div class="t" style="left:1267.00px;top:457.71px;font-size:15.7px;line-height:15.7px;color:#a9a9a9;letter-spacing:-0.619px;">mm</div>
<div class="t" style="left:927.60px;top:501.71px;font-size:15.7px;line-height:15.7px;color:#a9a9a9;letter-spacing:0.028px;">Minimum via diameter:</div>
<div class="r" style="left:1128px;top:493px;width:134px;height:34px;background:#323232;border:1px solid #1a1a1a;border-radius:5px;box-sizing:border-box;"></div>
<div class="t" style="left:1137.00px;top:502.30px;font-size:15px;line-height:15px;color:#a8a8a8;">0.5</div>
<div class="t" style="left:1267.00px;top:501.71px;font-size:15.7px;line-height:15.7px;color:#a9a9a9;letter-spacing:-0.619px;">mm</div>
<div class="t" style="left:927.60px;top:545.71px;font-size:15.7px;line-height:15.7px;color:#a9a9a9;letter-spacing:0.126px;">Copper to hole clearance:</div>
<div class="r" style="left:1128px;top:537px;width:134px;height:34px;background:#323232;border:1px solid #1a1a1a;border-radius:5px;box-sizing:border-box;"></div>
<div class="t" style="left:1137.00px;top:546.30px;font-size:15px;line-height:15px;color:#a8a8a8;">0.25</div>
<div class="t" style="left:1267.00px;top:545.71px;font-size:15.7px;line-height:15.7px;color:#a9a9a9;letter-spacing:-0.619px;">mm</div>
<div class="t" style="left:927.60px;top:589.71px;font-size:15.7px;line-height:15.7px;color:#a9a9a9;letter-spacing:0.127px;">Copper to edge clearance:</div>
<div class="r" style="left:1128px;top:581px;width:134px;height:34px;background:#323232;border:1px solid #1a1a1a;border-radius:5px;box-sizing:border-box;"></div>
<div class="t" style="left:1137.00px;top:590.30px;font-size:15px;line-height:15px;color:#a8a8a8;">0.5</div>
<div class="t" style="left:1267.00px;top:589.71px;font-size:15.7px;line-height:15.7px;color:#a9a9a9;letter-spacing:-0.619px;">mm</div>
<div class="t" style="left:927.60px;top:688.71px;font-size:15.7px;line-height:15.7px;color:#a9a9a9;letter-spacing:0.147px;">Minimum through hole:</div>
<div class="r" style="left:1128px;top:680px;width:134px;height:34px;background:#323232;border:1px solid #1a1a1a;border-radius:5px;box-sizing:border-box;"></div>
<div class="t" style="left:1137.00px;top:689.30px;font-size:15px;line-height:15px;color:#a8a8a8;">0.3</div>
<div class="t" style="left:1267.00px;top:688.71px;font-size:15.7px;line-height:15.7px;color:#a9a9a9;letter-spacing:-0.619px;">mm</div>
<div class="t" style="left:927.60px;top:732.71px;font-size:15.7px;line-height:15.7px;color:#a9a9a9;letter-spacing:0.090px;">Hole to hole clearance:</div>
<div class="r" style="left:1128px;top:724px;width:134px;height:34px;background:#323232;border:1px solid #1a1a1a;border-radius:5px;box-sizing:border-box;"></div>
<div class="t" style="left:1137.00px;top:733.30px;font-size:15px;line-height:15px;color:#a8a8a8;">0.25</div>
<div class="t" style="left:1267.00px;top:732.71px;font-size:15.7px;line-height:15.7px;color:#a9a9a9;letter-spacing:-0.619px;">mm</div>
<div class="t" style="left:927.60px;top:815.71px;font-size:15.7px;line-height:15.7px;color:#a9a9a9;letter-spacing:0.051px;">Minimum uVia diameter:</div>
<div class="r" style="left:1128px;top:807px;width:134px;height:34px;background:#323232;border:1px solid #1a1a1a;border-radius:5px;box-sizing:border-box;"></div>
<div class="t" style="left:1137.00px;top:816.30px;font-size:15px;line-height:15px;color:#a8a8a8;">0.2</div>
<div class="t" style="left:1267.00px;top:815.71px;font-size:15.7px;line-height:15.7px;color:#a9a9a9;letter-spacing:-0.619px;">mm</div>
<div class="t" style="left:927.60px;top:859.71px;font-size:15.7px;line-height:15.7px;color:#a9a9a9;letter-spacing:0.039px;">Minimum uVia hole:</div>
<div class="r" style="left:1128px;top:851px;width:134px;height:34px;background:#323232;border:1px solid #1a1a1a;border-radius:5px;box-sizing:border-box;"></div>
<div class="t" style="left:1137.00px;top:860.30px;font-size:15px;line-height:15px;color:#a8a8a8;">0.1</div>
<div class="t" style="left:1267.00px;top:859.71px;font-size:15.7px;line-height:15.7px;color:#a9a9a9;letter-spacing:-0.619px;">mm</div>
<div class="t" style="left:927.60px;top:942.71px;font-size:15.7px;line-height:15.7px;color:#a9a9a9;letter-spacing:0.085px;">Minimum item clearance:</div>
<div class="r" style="left:1128px;top:934px;width:134px;height:34px;background:#323232;border:1px solid #1a1a1a;border-radius:5px;box-sizing:border-box;"></div>
<div class="t" style="left:1137.00px;top:943.30px;font-size:15px;line-height:15px;color:#a8a8a8;">0</div>
<div class="t" style="left:1267.00px;top:942.71px;font-size:15.7px;line-height:15.7px;color:#a9a9a9;letter-spacing:-0.619px;">mm</div>
<div class="r" style="left:1128px;top:973px;width:134px;height:3px;background:#2f2f2f;border:1px solid #1a1a1a;border-bottom:none;border-radius:4px 4px 0 0;box-sizing:border-box;"></div>
<div class="r" style="left:845px;top:647px;width:454px;height:1px;background:#2d2d2d;"></div>
<div class="r" style="left:845px;top:774px;width:454px;height:1px;background:#2d2d2d;"></div>
<div class="r" style="left:845px;top:901px;width:454px;height:1px;background:#2d2d2d;"></div>
<div class="t" style="left:865.80px;top:654.11px;font-size:15.7px;line-height:15.7px;color:#a9a9a9;letter-spacing:-0.173px;">Holes</div>
<div class="t" style="left:865.80px;top:780.21px;font-size:15.7px;line-height:15.7px;color:#a9a9a9;letter-spacing:-0.034px;">uVias</div>
<div class="t" style="left:848.60px;top:907.41px;font-size:15.7px;line-height:15.7px;color:#a9a9a9;letter-spacing:-0.020px;">Silkscreen</div>
<div class="t" style="left:1339.00px;top:291.71px;font-size:15.7px;line-height:15.7px;color:#a9a9a9;letter-spacing:0.018px;">Arc/Circle Approximated by Segments</div>
<div class="t" style="left:1355.00px;top:322.71px;font-size:15.7px;line-height:15.7px;color:#a9a9a9;letter-spacing:0.032px;">Maximum allowed deviation:</div>
<div class="r" style="left:1560px;top:314px;width:161px;height:34px;background:#323232;border:1px solid #1a1a1a;border-radius:5px;box-sizing:border-box;"></div>
<div class="t" style="left:1568.00px;top:322.71px;font-size:15.7px;line-height:15.7px;color:#b0b0b0;">0.005</div>
<div class="t" style="left:1726.00px;top:322.71px;font-size:15.7px;line-height:15.7px;color:#a9a9a9;">mm</div>
<div class="t" style="left:1339.00px;top:360.17px;font-size:13.5px;line-height:13.5px;color:#a9a9a9;letter-spacing:0.457px;">Note: zone filling can be slow when &lt; 0.005 mm.</div>
<div class="r" style="left:1334px;top:397px;width:424px;height:1px;background:#2d2d2d;"></div>
<div class="t" style="left:1339.00px;top:418.31px;font-size:15.7px;line-height:15.7px;color:#a9a9a9;letter-spacing:0.054px;">Zone Fill Strategy</div>
<div class="t" style="left:1397.00px;top:450.71px;font-size:15.7px;line-height:15.7px;color:#a9a9a9;letter-spacing:0.247px;">Allow fillets/chamfers outside zone outline</div>
<div class="r" style="left:1377px;top:451px;width:16px;height:16px;background:#2a2a2a;border:1px solid #151515;border-radius:3px;box-sizing:border-box;"></div>
<div class="t" style="left:1374.00px;top:493.71px;font-size:15.7px;line-height:15.7px;color:#a9a9a9;letter-spacing:0.143px;">Minimum thermal relief spoke count:</div>
<div class="r" style="left:1637px;top:485px;width:116px;height:34px;background:#323232;border:1px solid #1a1a1a;border-radius:5px;box-sizing:border-box;"></div>
<div class="r" style="left:1682px;top:486px;width:1px;height:32px;background:#282828;"></div>
<div class="r" style="left:1717px;top:486px;width:1px;height:32px;background:#282828;"></div>
<div class="t" style="left:1647.00px;top:494.30px;font-size:15px;line-height:15px;color:#a8a8a8;">2</div>
<svg class="r" style="left:1690px;top:490px;" width="56" height="26" viewBox="0 0 56 26"><path d="M5 12 H15" stroke="#666" stroke-width="2"/><path d="M40 12 H50 M45 7 V17" stroke="#666" stroke-width="2"/></svg>
<div class="r" style="left:1334px;top:537px;width:424px;height:1px;background:#2d2d2d;"></div>
<div class="t" style="left:1340.00px;top:556.71px;font-size:15.7px;line-height:15.7px;color:#a9a9a9;letter-spacing:0.039px;">Length Tuning</div>
<div class="r" style="left:1343px;top:587px;width:16px;height:16px;background:#2f6fd8;border-radius:3px;"></div>
<svg class="r" style="left:1343px;top:587px;" width="16" height="16" viewBox="0 0 16 16"><path d="M3.5 8 L6.8 11.2 L12.5 4.5" fill="none" stroke="#fff" stroke-width="2"/></svg>
<div class="t" style="left:1364.00px;top:587.71px;font-size:15.7px;line-height:15.7px;color:#a9a9a9;letter-spacing:0.145px;">Include stackup height in track length calculations</div>
<div class="r" style="left:1860px;top:282px;width:5px;height:624px;background:#8a8a8a;border:1px solid #1e1e1e;border-radius:3px;box-sizing:border-box;"></div>
<div class="r" style="left:835px;top:978px;width:1030px;height:1px;background:#313131;"></div>
<div class="r" style="left:625px;top:984px;width:296px;height:34px;background:#353535;border:1px solid #161616;border-radius:6px;box-sizing:border-box;"></div>
<div class="t" style="left:642.50px;top:993.21px;font-size:15.7px;line-height:15.7px;color:#f0f0f0;letter-spacing:0.036px;">Import Settings from Another Board...</div>
<div class="r" style="left:1672px;top:984px;width:85px;height:34px;background:#353535;border:1px solid #161616;border-radius:6px;box-sizing:border-box;"></div>
<div class="t" style="left:1690.40px;top:993.21px;font-size:15.7px;line-height:15.7px;color:#f0f0f0;letter-spacing:-0.185px;">Cancel</div>
<div class="r" style="left:1763px;top:984px;width:85px;height:34px;background:#353535;border:1px solid #161616;border-radius:6px;box-sizing:border-box;"></div>
<div class="t" style="left:1795.40px;top:993.21px;font-size:15.7px;line-height:15.7px;color:#f0f0f0;letter-spacing:-2.108px;">OK</div>
<svg class="r" style="left:0;top:0" width="1919" height="1077"><g stroke="#ff0000" stroke-width="11" stroke-linecap="round" stroke-linejoin="round"><line x1="37" y1="27" x2="97" y2="6"/><line x1="37" y1="27" x2="163" y2="83"/><line x1="37" y1="27" x2="44" y2="103"/></g></svg>
<svg class="r" style="left:0;top:0" width="1919" height="1077"><g stroke="#ff0000" stroke-width="11" stroke-linecap="round" stroke-linejoin="round"><line x1="140.5" y1="334.5" x2="386" y2="254"/><line x1="140.5" y1="334.5" x2="158.5" y2="273"/><line x1="140.5" y1="334.5" x2="197" y2="366"/></g></svg>
<svg class="r" style="left:0;top:0" width="1919" height="1077"><g stroke="#ff0000" stroke-width="11" stroke-linecap="round" stroke-linejoin="round"><line x1="659.5" y1="526.5" x2="439" y2="596"/><line x1="659.5" y1="526.5" x2="584.5" y2="509.5"/><line x1="659.5" y1="526.5" x2="640" y2="580"/></g></svg>
</body></html>
